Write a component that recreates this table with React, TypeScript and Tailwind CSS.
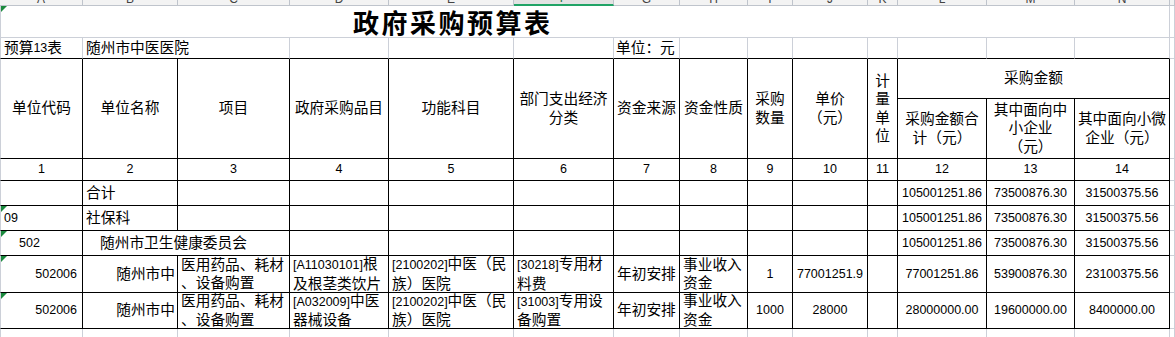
import React from "react";

type CellProps = { className?: string; children?: React.ReactNode; tri?: boolean };

function Cell({ className = "", children, tri }: CellProps) {
  return (
    <div className={"relative flex min-w-0 overflow-hidden border-r border-b " + className}>
      {tri && (
        <span className="absolute left-0 top-0 h-[6px] w-[6px] bg-[#1b8a3e] [clip-path:polygon(0_0,100%_0,0_100%)]" />
      )}
      {children}
    </div>
  );
}

const GA = "border-l border-l-[#ccd0d8]";
const TC = "border-black items-center justify-center text-center";
const TL = "border-black items-center justify-start pl-[3px] text-left";
const TR = "border-black items-center justify-end text-right";
const NUM = "text-[12.5px]";
const GR = "border-[#ccd0d8]";

function L({ children }: { children: React.ReactNode }) {
  return <span className="text-[12.5px]">{children}</span>;
}

function Lines({ lines }: { lines: React.ReactNode[] }) {
  return (
    <div className="flex flex-col whitespace-nowrap">
      {lines.map((l, i) => (
        <div key={i}>{l}</div>
      ))}
    </div>
  );
}

const letters = ["A", "B", "C", "D", "E", "F", "G", "H", "I", "J", "K", "L", "M", "N", ""];

function Empty({ n, cls }: { n: number; cls: string }) {
  return (
    <>
      {Array.from({ length: n }).map((_, i) => (
        <Cell key={i} className={cls} />
      ))}
    </>
  );
}

function Amounts({ a, b, c }: { a: string; b: string; c: string }) {
  return (
    <>
      <Cell className={TC + " " + NUM}>{a}</Cell>
      <Cell className={TC + " " + NUM}>{b}</Cell>
      <Cell className={TC + " " + NUM}>{c}</Cell>
      <Cell className={GR} />
    </>
  );
}

function DataRow({
  d,
  e,
  f,
  i,
  j,
  l,
  m,
  n,
}: {
  d: React.ReactNode[];
  e: React.ReactNode[];
  f: React.ReactNode[];
  i: string;
  j: string;
  l: string;
  m: string;
  n: string;
}) {
  return (
    <>
      <Cell tri className={GA + " " + TR + " pr-[5px] " + NUM}>502006</Cell>
      <Cell className={TR + " pr-[2px] whitespace-nowrap"}>随州市中</Cell>
      <Cell className={TL}>
        <Lines lines={["医用药品、耗材", "、设备购置"]} />
      </Cell>
      <Cell className={TL}>
        <Lines lines={d} />
      </Cell>
      <Cell className={TL + " pl-[1px]"}>
        <Lines lines={e} />
      </Cell>
      <Cell className={TL}>
        <Lines lines={f} />
      </Cell>
      <Cell className={TL + " whitespace-nowrap"}>年初安排</Cell>
      <Cell className={TL}>
        <Lines lines={["事业收入", "资金"]} />
      </Cell>
      <Cell className={TC + " " + NUM}>{i}</Cell>
      <Cell className={TC + " " + NUM}>{j}</Cell>
      <Cell className={TC} />
      <Amounts a={l} b={m} c={n} />
    </>
  );
}

export default function App() {
  return (
    <div className="grid h-[337px] w-[1175px] grid-cols-[83px_95px_112px_99px_125px_100px_66px_68px_45px_75px_30px_89px_88px_95px_5px] grid-rows-[6px_32px_21px_40px_60px_22px_25px_25px_25px_37px_36px_9px] overflow-hidden bg-white font-['Liberation_Sans','Noto_Sans_CJK_SC',sans-serif] text-[14.7px] leading-[18.5px] text-black">
      {/* column letter strip */}
      {letters.map((c, idx) =>
        c === "F" ? (
          <div
            key={idx}
            className="flex items-end justify-center overflow-hidden border-r border-b-2 border-r-[#bfc4cc] border-b-[#21a366] bg-[#e3e3e3]"
          >
            <span className="text-[12px] leading-[12px] text-[#217346]">{c}</span>
          </div>
        ) : (
          <div
            key={idx}
            className="flex items-end justify-center overflow-hidden border-r border-b border-[#bfc4cc] bg-[#f3f3f3]"
          >
            <span className="text-[12px] leading-[12px] text-[#444]">{c}</span>
          </div>
        )
      )}

      {/* title row */}
      <Cell tri className={"col-span-14 items-center pl-[352px] " + GA + " " + GR}>
        <span className="whitespace-nowrap font-['Noto_Sans_CJK_SC',sans-serif] text-[26px] font-bold leading-[28px] tracking-[2.5px]">
          政府采购预算表
        </span>
      </Cell>
      <Cell className={GR} />

      {/* row 2 */}
      <Cell className={GA + " border-r-[#ccd0d8] border-b-black items-center pl-[3px] whitespace-nowrap"}>
        预算<L>13</L>表
      </Cell>
      <Cell className="col-span-2 border-r-[#ccd0d8] border-b-black items-center pl-[3px] whitespace-nowrap">
        随州市中医医院
      </Cell>
      <Empty n={3} cls="border-r-[#ccd0d8] border-b-black" />
      <Cell className="border-r-[#ccd0d8] border-b-black items-center pl-[2px] whitespace-nowrap">单位：元</Cell>
      <Empty n={7} cls="border-r-[#ccd0d8] border-b-black" />
      <Cell className={GR} />

      {/* header */}
      <Cell className={"row-span-2 " + GA + " " + TC}>单位代码</Cell>
      <Cell className={"row-span-2 " + TC}>单位名称</Cell>
      <Cell className={"row-span-2 " + TC}>项目</Cell>
      <Cell className={"row-span-2 " + TC}>政府采购品目</Cell>
      <Cell className={"row-span-2 " + TC}>功能科目</Cell>
      <Cell className={"row-span-2 " + TC}>
        <Lines lines={["部门支出经济", "分类"]} />
      </Cell>
      <Cell className={"row-span-2 " + TC + " whitespace-nowrap"}>资金来源</Cell>
      <Cell className={"row-span-2 " + TC + " whitespace-nowrap"}>资金性质</Cell>
      <Cell className={"row-span-2 " + TC}>
        <Lines lines={["采购", "数量"]} />
      </Cell>
      <Cell className={"row-span-2 " + TC}>
        <Lines lines={["单价", "（元）"]} />
      </Cell>
      <Cell className={"row-span-2 " + TC}>
        <Lines lines={["计", "量", "单", "位"]} />
      </Cell>
      <Cell className={"col-span-3 " + TC}>采购金额</Cell>
      <Cell className={"row-span-2 " + GR} />
      <Cell className={TC}>
        <Lines lines={["采购金额合", "计（元）"]} />
      </Cell>
      <Cell className={TC}>
        <Lines lines={["其中面向中", "小企业", "（元）"]} />
      </Cell>
      <Cell className={TC}>
        <Lines lines={["其中面向小微", "企业（元）"]} />
      </Cell>

      {/* numbers row */}
      {Array.from({ length: 14 }).map((_, i) => (
        <Cell key={i} className={(i === 0 ? GA + " " : "") + TC + " " + NUM}>
          {i + 1}
        </Cell>
      ))}
      <Cell className={GR} />

      {/* 合计 */}
      <Cell className={GA + " " + TL} />
      <Cell className={TL}>合计</Cell>
      <Empty n={9} cls={TC} />
      <Amounts a="105001251.86" b="73500876.30" c="31500375.56" />

      {/* 社保科 */}
      <Cell tri className={GA + " " + TL + " " + NUM}>09</Cell>
      <Cell className={TL}>社保科</Cell>
      <Empty n={9} cls={TC} />
      <Amounts a="105001251.86" b="73500876.30" c="31500375.56" />

      {/* 502 */}
      <Cell tri className={GA + " " + TL + " pl-[18px] " + NUM}>502</Cell>
      <Cell className={"col-span-2 " + TL + " pl-[17px] whitespace-nowrap"}>随州市卫生健康委员会</Cell>
      <Empty n={8} cls={TC} />
      <Amounts a="105001251.86" b="73500876.30" c="31500375.56" />

      {/* data rows */}
      <DataRow
        d={[
          <>
            <L>[A11030101]</L>根
          </>,
          "及根茎类饮片",
        ]}
        e={[
          <>
            <L>[2100202]</L>中医（民
          </>,
          "族）医院",
        ]}
        f={[
          <>
            <L>[30218]</L>专用材
          </>,
          "料费",
        ]}
        i="1"
        j="77001251.9"
        l="77001251.86"
        m="53900876.30"
        n="23100375.56"
      />
      <DataRow
        d={[
          <>
            <L>[A032009]</L>中医
          </>,
          "器械设备",
        ]}
        e={[
          <>
            <L>[2100202]</L>中医（民
          </>,
          "族）医院",
        ]}
        f={[
          <>
            <L>[31003]</L>专用设
          </>,
          "备购置",
        ]}
        i="1000"
        j="28000"
        l="28000000.00"
        m="19600000.00"
        n="8400000.00"
      />

      {/* trailing grid row */}
      {Array.from({ length: 15 }).map((_, i) => (
        <div
          key={i}
          className={"border-r border-[#ccd0d8] " + (i === 0 ? "border-l border-l-[#ccd0d8]" : "")}
        />
      ))}
    </div>
  );
}
